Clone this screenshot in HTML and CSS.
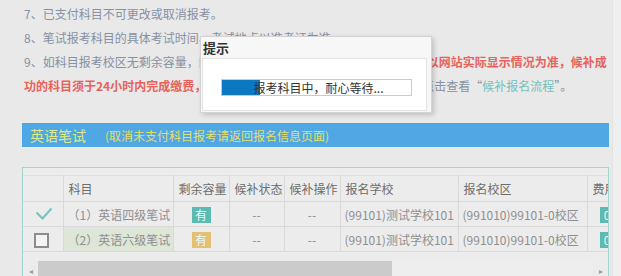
FILE: index.html
```html
<!DOCTYPE html>
<html lang="zh-CN">
<head>
<meta charset="utf-8">
<title>报考科目</title>
<link rel="stylesheet" href="styles.css">
</head>
<body>
<div class="screen">
  <div class="main">
    <div class="notes">
      <p>7、已支付科目不可更改或取消报考。</p>
      <p>8、笔试报考科目的具体考试时间、考试地点以准考证为准。</p>
      <p>9、如科目报考校区无剩余容量，网上报名系统开放候补报名服务，候补结果<span class="red">以网站实际显示情况为准，候补成</span></p>
      <p><span class="red">功的科目须于24小时内完成缴费，</span>逾期未缴费的视为自动放弃候补。具体请点击查看“<span class="link">候补报名流程</span>”。</p>
    </div>

    <div class="section-bar">
      <span class="bar-title">英语笔试</span>
      <span class="bar-note">(取消未支付科目报考请返回报名信息页面)</span>
    </div>

    <div class="grid">
      <div class="scroller">
        <table>
          <colgroup>
            <col class="c-check"><col class="c-subject"><col class="c-cap"><col class="c-status"><col class="c-op"><col class="c-school"><col class="c-campus"><col class="c-fee">
          </colgroup>
          <thead>
            <tr>
              <th></th>
              <th>科目</th>
              <th>剩余容量</th>
              <th>候补状态</th>
              <th>候补操作</th>
              <th>报名学校</th>
              <th>报名校区</th>
              <th>费用</th>
            </tr>
          </thead>
          <tbody>
            <tr>
              <td class="center">
                <svg class="check" width="18" height="14" viewBox="0 0 18 14"><polyline points="1.5,5.5 7.5,11.5 16.5,1.5" fill="none" stroke="#72c4be" stroke-width="2"/></svg>
              </td>
              <td>（1）英语四级笔试</td>
              <td class="center"><span class="badge teal">有</span></td>
              <td class="center">--</td>
              <td class="center">--</td>
              <td>(99101)测试学校101</td>
              <td>(991010)99101-0校区</td>
              <td class="fee"><span class="badge teal wide">0.00</span></td>
            </tr>
            <tr>
              <td class="center"><span class="box"></span></td>
              <td class="picked">（2）英语六级笔试</td>
              <td class="center"><span class="badge gold">有</span></td>
              <td class="center">--</td>
              <td class="center">--</td>
              <td>(99101)测试学校101</td>
              <td>(991010)99101-0校区</td>
              <td class="fee"><span class="badge teal wide">0.00</span></td>
            </tr>
          </tbody>
        </table>
      </div>
      <div class="hscroll">
        <span class="arrow">&#9666;</span>
        <span class="thumb"></span>
        <span class="track"></span>
        <span class="arrow">&#9656;</span>
      </div>
    </div>
  </div>
  <div class="vscroll"></div>

  <div class="modal">
    <div class="modal-head">提示</div>
    <div class="modal-body">
      <div class="progress">
        <div class="fill"></div>
        <span class="label">报考科目中，耐心等待...</span>
      </div>
    </div>
  </div>
</div>
</body>
</html>
```

FILE: styles.css
```css
* {
  box-sizing: border-box;
  margin: 0;
  padding: 0;
}

body {
  width: 621px;
  height: 276px;
  overflow: hidden;
  background: #e9e9e9;
  font-family: "Noto Sans CJK SC", "Microsoft YaHei", sans-serif;
  font-size: 12px;
}

.screen {
  position: relative;
  display: flex;
  height: 276px;
}

.main {
  flex: 1;
  min-width: 0;
  padding: 2px 3px 0 22px;
}

.vscroll {
  width: 9px;
  background: #efefef;
  border-left: 1px solid #e3e3e3;
}

.notes {
  padding-left: 2px;
  line-height: 24px;
  color: #8791a2;
}

.notes p {
  white-space: nowrap;
}

.red {
  color: #e8625b;
  font-weight: bold;
}

.link {
  color: #74c0bb;
}

.section-bar {
  margin-top: 25px;
  width: 587px;
  height: 24px;
  background: #4fa7e3;
  display: flex;
  align-items: center;
  padding-left: 8px;
}

.bar-title {
  font-size: 14px;
  color: #dde98c;
}

.bar-note {
  margin-left: 19px;
  color: #e4df6c;
}

.grid {
  margin-top: 20px;
  width: 587px;
  border: 1px solid #a0d6cf;
  border-bottom: 0;
  background: #ececec;
  padding-top: 7px;
  height: 110px;
  overflow: hidden;
}

.scroller {
  overflow: hidden;
}

table {
  border-collapse: collapse;
  table-layout: fixed;
  width: 624px;
  color: #8f8f8f;
}

.c-check { width: 40px; }
.c-subject { width: 110px; }
.c-cap { width: 56px; }
.c-status { width: 55px; }
.c-op { width: 56px; }
.c-school { width: 118px; }
.c-campus { width: 129px; }
.c-fee { width: 60px; }

thead tr {
  border-top: 1px solid #efd8da;
}

th {
  height: 26px;
  font-weight: normal;
  text-align: left;
  color: #6c6c6c;
  padding-left: 5px;
  border-right: 1px solid #d9d9d9;
  border-bottom: 1px solid #d9d9d9;
  white-space: nowrap;
}

td {
  height: 25px;
  padding-left: 4px;
  border-right: 1px solid #d9d9d9;
  border-bottom: 1px solid #d9d9d9;
  white-space: nowrap;
  overflow: hidden;
}

td.center {
  text-align: center;
  padding-left: 0;
}

td.picked {
  background: #dde6d7;
}

td.fee {
  padding-left: 12px;
}

.check {
  display: block;
  margin: 0 auto;
  position: relative;
  left: 1px;
}

.box {
  display: inline-block;
  width: 15px;
  height: 15px;
  border: 2px solid #8c8c8c;
  background: #f4f4f4;
  vertical-align: middle;
  position: relative;
  left: -1px;
}

.badge {
  display: inline-block;
  width: 19px;
  height: 16px;
  line-height: 16px;
  text-align: center;
  color: #eef6f5;
  vertical-align: middle;
}

.badge.wide {
  width: 32px;
}

.teal {
  background: #5dbab3;
}

.gold {
  background: #e2c172;
}

.hscroll {
  margin-top: 9px;
  display: flex;
  height: 18px;
  align-items: stretch;
}

.arrow {
  width: 15px;
  font-size: 8px;
  color: #9a9a9a;
  display: flex;
  align-items: center;
  justify-content: center;
}

.thumb {
  width: 354px;
  background: #cbcbcb;
}

.track {
  flex: 1;
  background: #eeeeee;
}

.modal {
  position: absolute;
  left: 200px;
  top: 36px;
  width: 232px;
  height: 77px;
  background: #f7f7f7;
  border: 1px solid #d3d3d3;
  box-shadow: 2px 2px 5px rgba(0, 0, 0, 0.18);
}

.modal-head {
  height: 21px;
  line-height: 21px;
  padding-left: 2px;
  font-size: 13px;
  font-weight: bold;
  color: #333;
}

.modal-body {
  margin: 0 4px 0 1px;
  height: 53px;
  background: #fff;
  border: 1px solid #e3e3e3;
  padding: 20px 0 0 18px;
}

.progress {
  position: relative;
  width: 191px;
  height: 17px;
  border: 1px solid #cacaca;
  background: #fff;
  display: flex;
  align-items: center;
  justify-content: center;
  padding-left: 4px;
}

.fill {
  position: absolute;
  left: 0;
  top: 0;
  bottom: 0;
  width: 38px;
  background: #0b78c1;
}

.label {
  position: relative;
  color: #333;
  line-height: 15px;
}
```
